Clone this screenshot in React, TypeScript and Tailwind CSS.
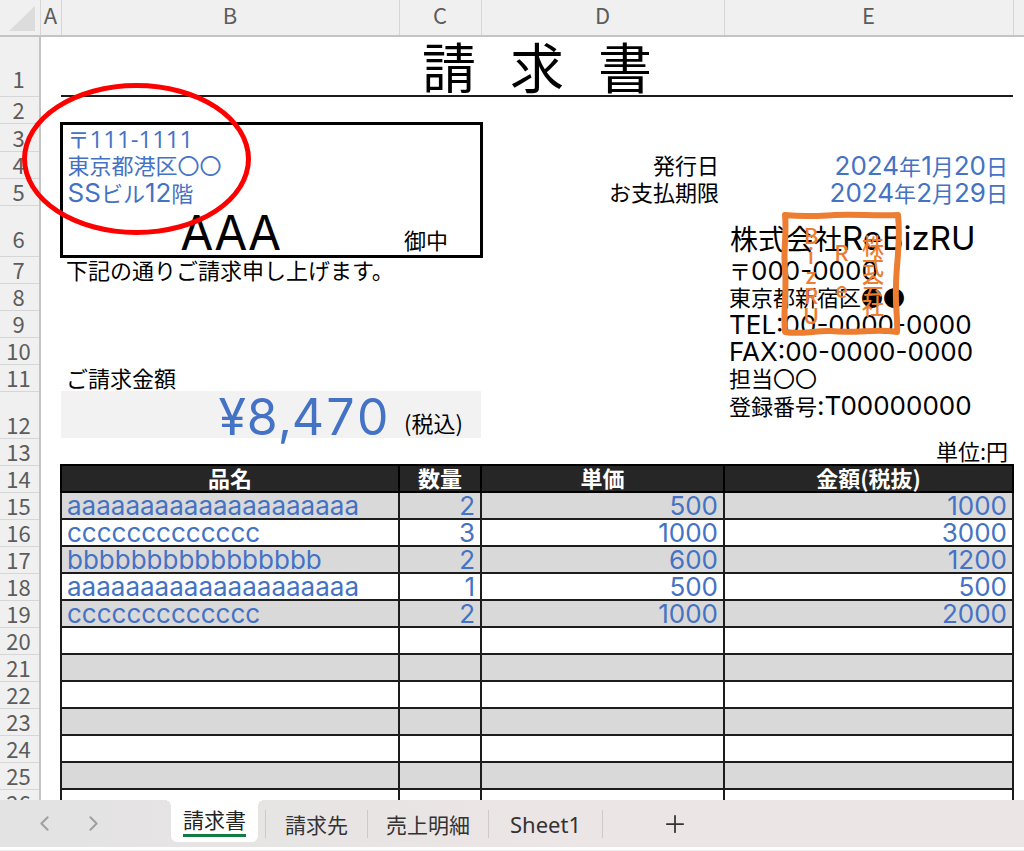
import { Fragment, type ReactNode } from 'react';
import { ChevronLeft, ChevronRight, Plus } from 'lucide-react';

const CJK = "font-['Noto_Sans_CJK_JP',sans-serif]";
const LATIN = "font-['Inter','Noto_Sans_CJK_JP',sans-serif]";
const OPEN = "font-['Open_Sans','Noto_Sans_CJK_JP',sans-serif]";

/** Sets Latin runs in a slightly larger face than the Japanese around them. */
function Mixed({ text, face = LATIN, latin = 'text-[26px]' }: { text: string; face?: string; latin?: string }) {
  const runs = text.split(/([\x20-\x7e]+)/).filter(Boolean);
  return (
    <>
      {runs.map((run, i) =>
        /^[\x20-\x7e]/.test(run) ? (
          <span key={i} className={`${face} ${latin}`}>
            {run}
          </span>
        ) : (
          <Fragment key={i}>{run}</Fragment>
        ),
      )}
    </>
  );
}

interface RowProps {
  n: number;
  height?: string;
  pad?: string;
  children?: ReactNode;
}

function Row({ n, height = 'h-[27px]', pad = 'pb-1', children }: RowProps) {
  return (
    <tr className={height}>
      <th
        scope="row"
        className={`border-r-2 border-b border-r-[#c4c4c4] border-b-[#d6d6d6] bg-[#f0f0f0] pr-[2px] text-center align-bottom leading-5 font-normal text-[#5c5c5c] ${pad}`}
      >
        {n}
      </th>
      <td />
      {children}
    </tr>
  );
}

const items = [
  { name: 'aaaaaaaaaaaaaaaaaaaa', qty: 2, price: 500, total: 1000 },
  { name: 'ccccccccccccc', qty: 3, price: 1000, total: 3000 },
  { name: 'bbbbbbbbbbbbbbbb', qty: 2, price: 600, total: 1200 },
  { name: 'aaaaaaaaaaaaaaaaaaaa', qty: 1, price: 500, total: 500 },
  { name: 'ccccccccccccc', qty: 2, price: 1000, total: 2000 },
];
const lines = Array.from({ length: 12 }, (_, i) => items[i]);

const blue = 'text-[#4472c4]';
const left = 'px-[5px] text-left align-bottom';
const right = 'px-[5px] text-right align-bottom';
const jp = 'pb-1 leading-5';
const jpTall = 'pb-[6px] leading-5';

function Stamp() {
  return (
    <div className="pointer-events-none absolute top-[6px] left-[57px] h-[125px] w-[121px] font-medium text-[#ed7d31]">
      <svg viewBox="0 0 121 125" className="absolute inset-0 h-full w-full" fill="none" aria-hidden="true">
        <path
          d="M4 4 C24 6 34 5 54 4 C76 3 92 5 117 4 C120 32 115 52 115 76 C114 94 117 108 116 121 C94 117 76 123 50 120 C34 119 22 124 4 121 C2 96 6 82 4 58 C2 38 6 22 4 4 Z"
          stroke="#ed7d31"
          strokeWidth="6"
          strokeLinejoin="round"
        />
      </svg>
      <div className="relative flex h-full items-center justify-between pr-[18px] pl-[20px] text-[22px] leading-5">
        <div className="flex w-5 flex-col items-center">
          {[...'BizRU'].map((c) => (
            <span key={c}>{c}</span>
          ))}
        </div>
        <div className="flex w-5 flex-col items-center gap-[17px] pb-2">
          {[...'Re'].map((c) => (
            <span key={c}>{c}</span>
          ))}
        </div>
        <div className="flex w-[22px] flex-col items-center">
          {[...'株式会社'].map((c) => (
            <span key={c}>{c}</span>
          ))}
        </div>
      </div>
    </div>
  );
}

function Sheet() {
  const grid = 'border-2 border-[#1c1c1c]';
  return (
    <table className="w-full table-fixed border-collapse text-[22px] leading-6 whitespace-nowrap text-black">
      <colgroup>
        <col className="w-[40px]" />
        <col className="w-[21px]" />
        <col className="w-[338px]" />
        <col className="w-[82px]" />
        <col className="w-[243px]" />
        <col />
        <col className="w-[11px]" />
      </colgroup>
      <thead>
        <tr className="h-9 bg-[#f0f0f0] text-[#5c5c5c]">
          <td className="border-b-2 border-[#c4c4c4] p-0">
            <svg viewBox="0 0 40 34" className="block h-[34px] w-10" aria-hidden="true">
              <path d="M9 30 L35 5 V30 Z" fill="#dcdcdc" />
            </svg>
          </td>
          {['A', 'B', 'C', 'D', 'E'].map((c) => (
            <th
              key={c}
              scope="col"
              className="border-r border-b-2 border-l border-x-[#d6d6d6] border-b-[#c4c4c4] p-0 pb-2 text-center font-normal"
            >
              {c}
            </th>
          ))}
          <td className="border-b-2 border-[#c4c4c4]" />
        </tr>
      </thead>
      <tbody>
        <Row n={1} height="h-[60px]" pad="pb-2">
          <td colSpan={4} className="border-b-2 border-[#1c1c1c] p-0 align-bottom">
            <h1 className="flex justify-center gap-[34px] text-[54px] leading-[58px] font-normal">
              <span>請</span>
              <span>求</span>
              <span>書</span>
            </h1>
          </td>
          <td />
        </Row>
        <Row n={2} />
        <Row n={3} height="h-[28px]">
          <td className={`border-t-3 border-l-3 border-black ${left} ${blue}`}>
            <Mixed text="〒111-1111" face={OPEN} latin="text-[24px]" />
          </td>
          <td className="border-t-3 border-r-3 border-black" />
        </Row>
        <Row n={4}>
          <td className={`border-l-3 border-black ${left} ${jp} ${blue}`}>東京都港区〇〇</td>
          <td className="border-r-3 border-black" />
          <td className={`${right} ${jp}`}>発行日</td>
          <td className={`${right} ${blue}`}>
            <Mixed text="2024年1月20日" />
          </td>
        </Row>
        <Row n={5}>
          <td className={`border-l-3 border-black ${left} ${blue}`}>
            <Mixed text="SSビル12階" />
          </td>
          <td className="border-r-3 border-black" />
          <td className={`${right} ${jp}`}>お支払期限</td>
          <td className={`${right} ${blue}`}>
            <Mixed text="2024年2月29日" />
          </td>
        </Row>
        <Row n={6} height="h-[51px]" pad="pb-2">
          <td className={`border-b-3 border-l-3 border-black p-0 text-center align-bottom text-[48px] leading-[44px] ${LATIN}`}>
            AAA
          </td>
          <td className={`border-r-3 border-b-3 border-black ${left} ${jpTall}`}>御中</td>
          <td />
          <td className="p-0 align-bottom">
            <div className="relative flex h-[51px] items-end px-[6px] text-[28px] leading-9">
              <span>
                <Mixed text="株式会社ReBizRU" latin="text-[33px]" />
              </span>
              <Stamp />
            </div>
          </td>
        </Row>
        <Row n={7}>
          <td colSpan={2} className={`${left} ${jp}`}>
            下記の通りご請求申し上げます。
          </td>
          <td />
          <td className={left}>
            <Mixed text="〒000-0000" />
          </td>
        </Row>
        <Row n={8}>
          <td colSpan={3} />
          <td className={`${left} ${jp}`}>東京都新宿区●●</td>
        </Row>
        <Row n={9}>
          <td colSpan={3} />
          <td className={left}>
            <Mixed text="TEL:00-0000-0000" />
          </td>
        </Row>
        <Row n={10}>
          <td colSpan={3} />
          <td className={left}>
            <Mixed text="FAX:00-0000-0000" />
          </td>
        </Row>
        <Row n={11}>
          <td colSpan={2} className={`${left} ${jp}`}>
            ご請求金額
          </td>
          <td />
          <td className={`${left} ${jp}`}>担当〇〇</td>
        </Row>
        <Row n={12} height="h-[47px]">
          <td
            className={`bg-[#f2f2f2] p-0 pr-[10px] text-right align-bottom text-[50px] leading-[42px] tabular-nums ${LATIN} ${blue}`}
          >
            ¥8,470
          </td>
          <td className={`bg-[#f2f2f2] ${left} ${jpTall}`}>(税込)</td>
          <td />
          <td className="px-[5px] pt-[2px] text-left align-top">
            <Mixed text="登録番号:T00000000" />
          </td>
        </Row>
        <Row n={13}>
          <td colSpan={3} />
          <td className={`${right} ${jp}`}>単位:円</td>
        </Row>
        <Row n={14}>
          {['品名', '数量', '単価', '金額(税抜)'].map((h) => (
            <th
              key={h}
              scope="col"
              className="border-2 border-black bg-[#262626] px-0 pb-1 text-center align-bottom leading-5 font-bold text-white"
            >
              {h}
            </th>
          ))}
        </Row>
        {lines.map((item, i) => {
          const cell = `${grid} ${LATIN} ${blue} text-[26px] ${i % 2 === 0 ? 'bg-[#d9d9d9]' : 'bg-white'}`;
          return (
            <Row key={i} n={15 + i}>
              <td className={`${cell} ${left}`}>{item?.name}</td>
              <td className={`${cell} ${right}`}>{item?.qty}</td>
              <td className={`${cell} ${right}`}>{item?.price}</td>
              <td className={`${cell} ${right}`}>{item?.total}</td>
            </Row>
          );
        })}
      </tbody>
    </table>
  );
}

function SheetTabs() {
  return (
    <nav
      aria-label="シート"
      className="flex h-[47px] shrink-0 items-start bg-linear-to-r from-[#e3e3e3] via-[#ebe5e5] to-[#ebe5e5] text-[21px] leading-7 text-[#333]"
    >
      <div className="flex h-[47px] w-[171px] items-center gap-6 pl-8 text-[#a0a0a0]">
        <button type="button" aria-label="前のシート">
          <ChevronLeft className="size-[25px]" strokeWidth={2} />
        </button>
        <button type="button" aria-label="次のシート">
          <ChevronRight className="size-[25px]" strokeWidth={2} />
        </button>
      </div>
      <button
        type="button"
        aria-current="page"
        className="relative flex h-[42px] items-start rounded-b-md bg-white px-3 pt-[5px] text-[#222] before:absolute before:top-0 before:-left-1.5 before:size-1.5 before:bg-[radial-gradient(circle_at_0_100%,transparent_6px,white_6px)] after:absolute after:top-0 after:-right-1.5 after:size-1.5 after:bg-[radial-gradient(circle_at_100%_100%,transparent_6px,white_6px)]"
      >
        <span className="block border-b-3 border-[#107c41] pb-px">請求書</span>
      </button>
      <div className="mt-[10px] ml-[7px] flex h-7 items-center divide-x divide-[#cfcaca] border-x border-[#cfcaca]">
        <button type="button" className="h-7 px-[19px]">
          請求先
        </button>
        <button type="button" className="h-7 px-[18px]">
          売上明細
        </button>
        <button type="button" className="h-7 px-[21px] font-['Noto_Sans',sans-serif] text-[22px]">
          Sheet1
        </button>
      </div>
      <button type="button" aria-label="新しいシート" className="mt-[10px] ml-[58px]">
        <Plus className="size-7" strokeWidth={1.5} />
      </button>
    </nav>
  );
}

export default function App() {
  return (
    <div className={`flex h-screen flex-col bg-white ${CJK}`}>
      <main className="relative min-h-0 flex-1 overflow-hidden">
        <Sheet />
        <div className="pointer-events-none absolute top-[83px] left-[22px] h-[152px] w-[229px] rounded-[50%] border-[5px] border-[#fe0000]" />
      </main>
      <SheetTabs />
      <div className="h-1 shrink-0 border-b border-[#ececec] bg-white" />
    </div>
  );
}
